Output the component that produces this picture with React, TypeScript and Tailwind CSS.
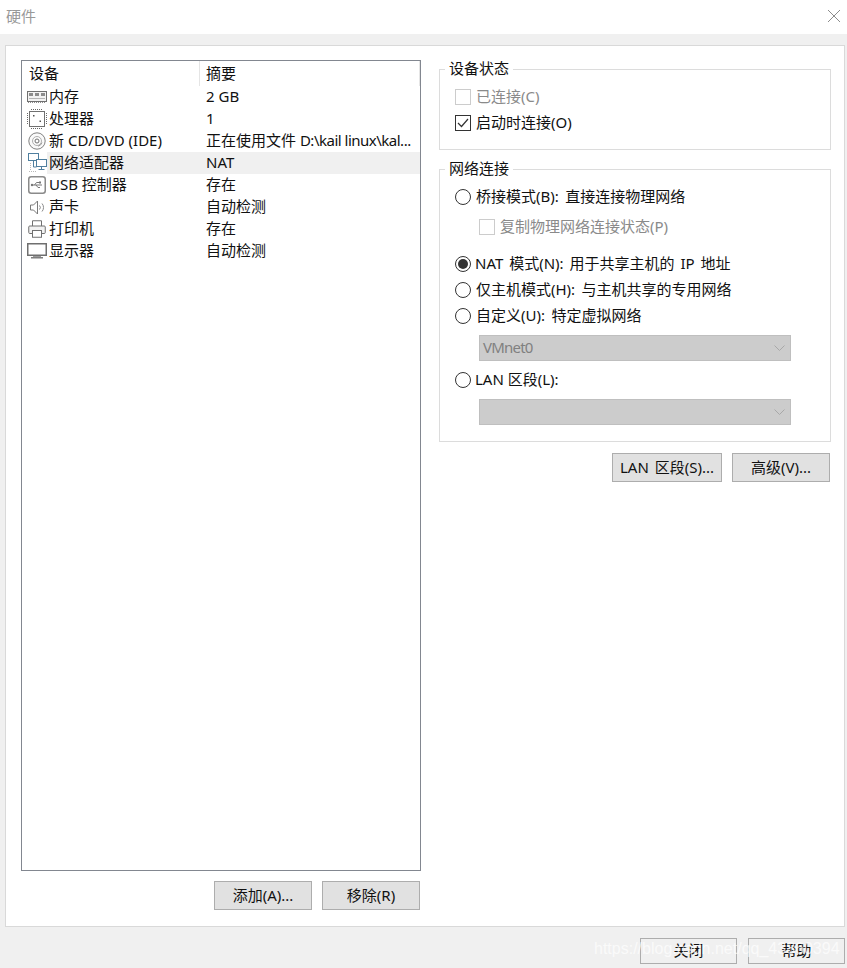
import type { ReactNode } from "react";

const FONT = "font-['Noto_Sans','Noto_Sans_CJK_SC',sans-serif]";

function MemoryIcon() {
    return (
        <svg width="20" height="13" viewBox="0 0 20 13" fill="none">
            <rect x="0.5" y="0.5" width="19" height="10" fill="#f2f2f2" stroke="#707070" />
            <rect x="2" y="2" width="4" height="3" fill="#8c8c8c" />
            <rect x="8" y="2" width="4" height="3" fill="#8c8c8c" />
            <rect x="14" y="2" width="4" height="3" fill="#8c8c8c" />
            <path d="M2 7.5h16" stroke="#b5b5b5" />
            <path d="M1 11.5h18" stroke="#8c8c8c" strokeDasharray="1 1" />
        </svg>
    );
}

function CpuIcon() {
    return (
        <svg width="20" height="20" viewBox="0 0 20 20" fill="none">
            <rect x="2.5" y="2.5" width="15" height="15" fill="#fff" stroke="#707070" />
            <path d="M4 0.5h12M4 19.5h12M0.5 4v12M19.5 4v12" stroke="#666" strokeDasharray="1 1" />
            <rect x="6" y="6" width="1.5" height="1.5" fill="#555" />
            <rect x="12.5" y="11.5" width="1.5" height="1.5" fill="#555" />
        </svg>
    );
}

function DiscIcon() {
    return (
        <svg width="18" height="18" viewBox="0 0 18 18" fill="none">
            <circle cx="9" cy="9" r="8.2" fill="#fafafa" stroke="#808080" />
            <circle cx="9" cy="9" r="4.5" stroke="#b0b0b0" />
            <circle cx="9" cy="9" r="2" fill="#fff" stroke="#707070" />
            <path d="M10 14.2a5.3 5.3 0 0 0 4-3.6" stroke="#9a9a9a" />
        </svg>
    );
}

function NetworkIcon() {
    return (
        <svg width="19" height="20" viewBox="0 0 19 20" fill="none">
            <rect x="0.5" y="0.5" width="10" height="7" fill="#fff" stroke="#4f7f9f" />
            <rect x="8.5" y="6.5" width="10" height="7" fill="#fff" stroke="#4f7f9f" />
            <path d="M5.5 8v6h3M13.5 14v2M10.5 16.5h6" stroke="#4f7f9f" />
            <path d="M1 18.5h7M2.5 10v8" stroke="#b8b8b8" strokeDasharray="1 1" />
        </svg>
    );
}

function UsbIcon() {
    return (
        <svg width="18" height="18" viewBox="0 0 18 18" fill="none">
            <rect x="0.75" y="0.75" width="16.5" height="16.5" rx="2.5" fill="#fff" stroke="#8a8a8a" strokeWidth="1.5" />
            <path d="M4 9h10M6.5 9l2-2.5h2.5M8 9l2 2.5h2" stroke="#777" />
            <rect x="11" y="5.5" width="2" height="2" fill="#777" />
            <circle cx="4" cy="9" r="1.2" fill="#777" />
        </svg>
    );
}

function SpeakerIcon() {
    return (
        <svg width="15" height="15" viewBox="0 0 15 15" fill="none">
            <path d="M0.5 5h3l4-4v13l-4-4h-3z" fill="#fff" stroke="#7a7a7a" />
            <path d="M9.5 5.5a3 3 0 0 1 0 4M12 3.5a6 6 0 0 1 0 8" stroke="#8a8a8a" />
        </svg>
    );
}

function PrinterIcon() {
    return (
        <svg width="18" height="18" viewBox="0 0 18 18" fill="none">
            <path d="M4.5 6V0.75h9V6" fill="#fff" stroke="#707070" />
            <rect x="0.75" y="6" width="16.5" height="7.5" rx="1" fill="#f2f2f2" stroke="#707070" />
            <rect x="4.5" y="10.5" width="9" height="6.75" fill="#fff" stroke="#707070" />
        </svg>
    );
}

function MonitorIcon() {
    return (
        <svg width="20" height="16" viewBox="0 0 20 16" fill="none">
            <rect x="0.75" y="0.75" width="18.5" height="11.5" fill="#fff" stroke="#6f6f6f" strokeWidth="1.5" />
            <rect x="6" y="13" width="8" height="1" fill="#9a9a9a" />
            <rect x="4" y="14" width="12" height="1.5" fill="#7f7f7f" />
        </svg>
    );
}

const devices: { icon: ReactNode; name: string; summary: ReactNode; selected?: boolean }[] = [
    { icon: <MemoryIcon />, name: "内存", summary: "2 GB" },
    { icon: <CpuIcon />, name: "处理器", summary: "1" },
    {
        icon: <DiscIcon />,
        name: "新 CD/DVD (IDE)",
        summary: (
            <>
                正在使用文件 <span className="tracking-[-0.5px]">D:\kail linux\kal...</span>
            </>
        ),
    },
    { icon: <NetworkIcon />, name: "网络适配器", summary: "NAT", selected: true },
    { icon: <UsbIcon />, name: "USB 控制器", summary: "存在" },
    { icon: <SpeakerIcon />, name: "声卡", summary: "自动检测" },
    { icon: <PrinterIcon />, name: "打印机", summary: "存在" },
    { icon: <MonitorIcon />, name: "显示器", summary: "自动检测" },
];

function DeviceRow({ icon, name, summary, selected }: (typeof devices)[number]) {
    return (
        <div className="flex h-[22px] items-center">
            <div className="flex w-[25px] shrink-0 items-center justify-center pl-[5px]">{icon}</div>
            <div className={`flex h-full flex-1 items-center pb-[2px] ${selected ? "bg-[#f0f0f0]" : ""}`}>
                <div className="w-[159px] shrink-0 whitespace-nowrap pl-[2px]">{name}</div>
                <div className="whitespace-nowrap">{summary}</div>
            </div>
        </div>
    );
}

function Button({ children, className }: { children: ReactNode; className: string }) {
    return (
        <button
            type="button"
            className={`flex items-center justify-center border border-[#adadad] pb-[2px] text-[#111] ${className}`}
        >
            {children}
        </button>
    );
}

function Group({ title, className, children }: { title: string; className: string; children: ReactNode }) {
    return (
        <div className={`relative border border-[#dcdcdc] pl-[15px] pt-[14px] ${className}`}>
            <span className="absolute left-[5px] top-[-12px] bg-white px-[4px] leading-[20px]">{title}</span>
            {children}
        </div>
    );
}

function Checkbox({ label, checked, disabled }: { label: string; checked?: boolean; disabled?: boolean }) {
    return (
        <div className={`flex h-[26px] items-center gap-[5px] ${disabled ? "text-[#8a8a8a]" : ""}`}>
            <span
                className={`flex h-[16px] w-[16px] items-center justify-center border bg-white ${
                    disabled ? "border-[#cccccc]" : "border-[#333333]"
                }`}
            >
                {checked && (
                    <svg width="12" height="10" viewBox="0 0 12 10" fill="none">
                        <path d="M1 5l3.5 3.5L11 1" stroke="#333" strokeWidth="1.2" />
                    </svg>
                )}
            </span>
            <span className="whitespace-nowrap pb-[2px]">{label}</span>
        </div>
    );
}

function Radio({
    label,
    checked,
    tight,
    labelClass = "[word-spacing:2.5px]",
}: {
    label: string;
    checked?: boolean;
    tight?: boolean;
    labelClass?: string;
}) {
    return (
        <div className={`flex h-[26px] items-center ${tight ? "gap-[4px]" : "gap-[5px]"}`}>
            <span className="flex h-[16px] w-[16px] items-center justify-center rounded-full border border-[#333333] bg-white">
                {checked && <span className="h-[10px] w-[10px] rounded-full bg-[#333333]" />}
            </span>
            <span className={`whitespace-nowrap pb-[2px] ${labelClass}`}>{label}</span>
        </div>
    );
}

function DisabledSelect({ value }: { value?: string }) {
    return (
        <div className="ml-[24px] mt-[6px] flex h-[26px] w-[312px] items-center justify-between border border-[#bfbfbf] bg-[#cccccc] pl-[3px] pr-[5px] text-[#808080]">
            <span className="pb-[2px] tracking-[-0.8px]">{value}</span>
            <svg width="11" height="6" viewBox="0 0 11 6" fill="none">
                <path d="M0.5 0.5l5 5 5-5" stroke="#a8a8a8" />
            </svg>
        </div>
    );
}

export default function App() {
    return (
        <div className={`relative flex h-[968px] w-[847px] flex-col overflow-hidden bg-[#f0f0f0] text-[15px] leading-[20px] text-[#111] ${FONT}`}>
            <div className="flex h-[34px] shrink-0 items-center justify-between bg-white pb-[3px] pl-[6px] pr-[6px] text-[#999999]">
                <span>硬件</span>
                <svg width="14" height="14" viewBox="0 0 14 14" fill="none">
                    <path d="M1 1l12 12M13 1L1 13" stroke="#8c8c8c" />
                </svg>
            </div>

            <div className="ml-[5px] mt-[11px] flex h-[882px] w-[840px] border border-[#d9d9d9] bg-white pl-[15px] pt-[14px]">
                <div className="flex w-[400px] shrink-0 flex-col">
                    <div className="h-[811px] border border-[#828790] bg-white">
                        <div className="flex h-[25px] items-center">
                            <div className="h-full w-[178px] border-r border-[#e5e5e5] pl-[7px] pt-[2px]">设备</div>
                            <div className="h-full flex-1 border-r border-[#e5e5e5] pl-[6px] pt-[2px]">摘要</div>
                        </div>
                        {devices.map((device) => (
                            <DeviceRow key={device.name} {...device} />
                        ))}
                    </div>
                    <div className="mr-[1px] mt-[10px] flex justify-end gap-[10px]">
                        <Button className="h-[29px] w-[98px] bg-[#e1e1e1]">添加(A)...</Button>
                        <Button className="h-[29px] w-[98px] bg-[#e1e1e1]">移除(R)</Button>
                    </div>
                </div>

                <div className="ml-[18px] mt-[9px] flex w-[392px] flex-col">
                    <Group title="设备状态" className="h-[81px]">
                        <Checkbox label="已连接(C)" disabled />
                        <Checkbox label="启动时连接(O)" checked />
                    </Group>
                    <Group title="网络连接" className="mt-[19px] h-[273px]">
                        <Radio label="桥接模式(B): 直接连接物理网络" />
                        <div className="ml-[24px] mt-[4px]">
                            <Checkbox label="复制物理网络连接状态(P)" disabled />
                        </div>
                        <div className="mt-[11px]">
                            <Radio label="NAT 模式(N): 用于共享主机的 IP 地址" checked tight labelClass="[word-spacing:2px]" />
                        </div>
                        <Radio label="仅主机模式(H): 与主机共享的专用网络" />
                        <Radio label="自定义(U): 特定虚拟网络" />
                        <DisabledSelect value="VMnet0" />
                        <div className="mt-[6px]">
                            <Radio label="LAN 区段(L):" tight labelClass="" />
                        </div>
                        <DisabledSelect />
                    </Group>
                    <div className="mr-[1px] mt-[11px] flex justify-end gap-[10px]">
                        <Button className="h-[29px] w-[110px] bg-[#e1e1e1] [word-spacing:2px]">LAN 区段(S)...</Button>
                        <Button className="h-[29px] w-[98px] bg-[#e1e1e1]">高级(V)...</Button>
                    </div>
                </div>
            </div>

            <div className="mr-[2px] mt-[11px] flex justify-end gap-[11px]">
                <Button className="h-[26px] w-[97px] bg-[#f0f0f0]">关闭</Button>
                <Button className="h-[26px] w-[97px] bg-[#f0f0f0]">帮助</Button>
            </div>

            <span className="absolute left-[594px] top-[939px] whitespace-nowrap font-['Liberation_Sans',sans-serif] text-[16px] text-white/70">
                https://blog.csdn.net/qq_43860394
            </span>
        </div>
    );
}
